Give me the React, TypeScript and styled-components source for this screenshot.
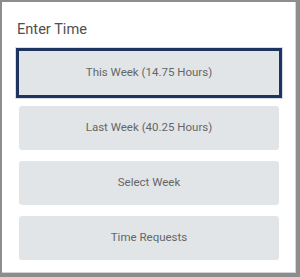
import React from "react";
import styled, { createGlobalStyle } from "styled-components";

const Global = createGlobalStyle`
  html, body { margin: 0; padding: 0; background: #ffffff; }
  body { font-family: Roboto, "Liberation Sans", sans-serif; }
  * { box-sizing: border-box; }
`;

const Frame = styled.div`
  width: 300px;
  height: 277px;
  background: #8d8d8d;
  padding: 2px 4px 4px 2px;
`;

const Card = styled.div`
  width: 100%;
  height: 100%;
  background: #ffffff;
  border-right: 1px solid #d4d4d4;
  border-bottom: 1px solid #d4d4d4;
  padding: 18px 0 0 15px;
  display: flex;
  flex-direction: column;
`;

const Title = styled.h2`
  margin: 0;
  font-size: 14.6px;
  font-weight: 400;
  color: #505050;
  line-height: 18px;
`;

const List = styled.div`
  display: flex;
  flex-direction: column;
  gap: 11px;
  margin-top: 13px;
  padding-left: 2px;
`;

const Button = styled.button<{ $active?: boolean }>`
  width: 260px;
  height: 44px;
  border: none;
  border-radius: ${(p) => (p.$active ? "0" : "3px")};
  background: #e1e5e8;
  color: #666666;
  font-family: Roboto, "Liberation Sans", sans-serif;
  font-size: 11.5px;
  display: flex;
  align-items: center;
  justify-content: center;
  padding: 0 0 2px;
  outline: none;
  box-shadow: ${(p) =>
    p.$active ? "0 0 0 3px #1d3461, 0 0 0 4px #d9dee4" : "none"};
  cursor: pointer;
`;

const items = [
  "This Week (14.75 Hours)",
  "Last Week (40.25 Hours)",
  "Select Week",
  "Time Requests",
];

export default function App() {
  return (
    <>
      <Global />
      <Frame>
        <Card>
          <Title>Enter Time</Title>
          <List>
            {items.map((t, i) => (
              <Button key={t} $active={i === 0}>
                {t}
              </Button>
            ))}
          </List>
        </Card>
      </Frame>
    </>
  );
}
